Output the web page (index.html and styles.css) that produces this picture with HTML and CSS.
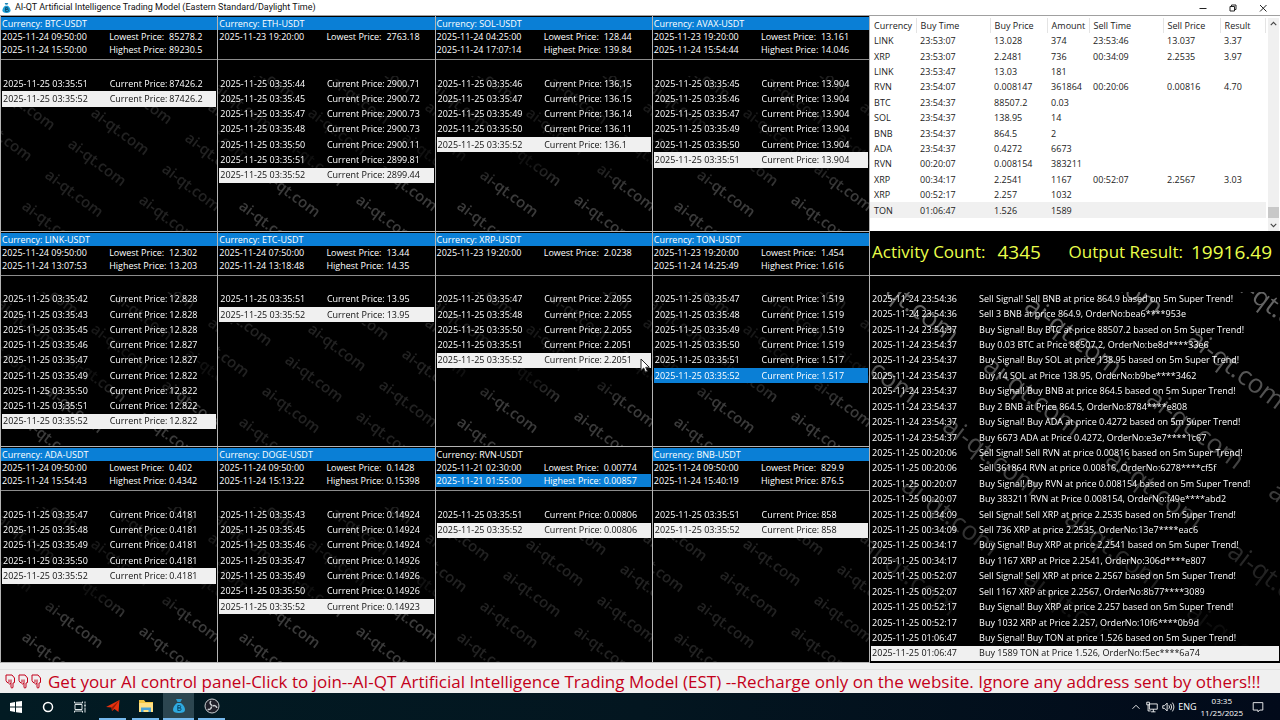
FILE: index.html
```html
<!DOCTYPE html>
<html lang="en">
<head>
    <meta charset="UTF-8">
    <meta name="viewport" content="width=device-width, initial-scale=1.0">
    <title>AI-QT Artificial Intelligence Trading Model</title>
    <link rel="stylesheet" href="styles.css">
</head>
<body>
    <header class="titlebar">
        <svg class="app-icon" viewBox="0 0 20 24" aria-hidden="true">
            <path d="M6 1h8l-2 4H8z" fill="#1c86b8"/>
            <path d="M7 7h6c4 3 6 7 6 10 0 4-3 6-9 6s-9-2-9-6c0-3 2-7 6-10z" fill="#1fa0d8"/>
            <path d="M8 11v9M8 11h3a2 2 0 0 1 0 4H8h4a2 2 0 0 1 0 5H8" fill="none" stroke="#0b4a6b" stroke-width="2"/>
        </svg>
        <h1>AI-QT Artificial Intelligence Trading Model (Eastern Standard/Daylight Time)</h1>
        <div class="window-buttons">
            <button type="button" aria-label="Minimize"><svg viewBox="0 0 10 10"><path d="M1.500 5.500h7"/></svg></button>
            <button type="button" aria-label="Restore"><svg viewBox="0 0 10 10"><path d="M2 3.500h4.500v4.500H2zM3.500 3.500V2h4.500v4.500H6.500"/></svg></button>
            <button type="button" aria-label="Close"><svg viewBox="0 0 10 10"><path d="M2 2l6.500 6.500M8.500 2L2 8.500"/></svg></button>
        </div>
    </header>

    <main class="workspace">
        <section class="markets" id="markets"></section>

        <aside class="side">
            <div class="trades">
                <table>
                    <colgroup>
                        <col class="c-short"><col class="c-time"><col class="c-price"><col class="c-amount"><col class="c-time"><col class="c-price"><col>
                    </colgroup>
                    <thead>
                        <tr><th>Currency</th><th>Buy Time</th><th>Buy Price</th><th>Amount</th><th>Sell Time</th><th>Sell Price</th><th>Result</th></tr>
                    </thead>
                    <tbody id="trades"></tbody>
                </table>
                <div class="scrollbar">
                    <svg viewBox="0 0 10 10"><path d="M2.500 6.500L5 4l2.500 2.500"/></svg>
                    <span class="thumb"></span>
                    <svg viewBox="0 0 10 10"><path d="M2.500 3.500L5 6l2.500-2.500"/></svg>
                </div>
            </div>
            <div class="totals">
                <span>Activity Count:</span><span class="value count">4345</span>
                <span class="result-label">Output Result:</span><span class="value">19916.49</span>
            </div>
            <div class="log">
                <svg class="watermark" id="logMark" aria-hidden="true"></svg>
                <ul id="log"></ul>
            </div>
        </aside>
    </main>

    <div class="notice">
        <a href="#join">
            <span class="hands" id="hands"></span>
            <span>Get your AI control panel-Click to join--AI-QT Artificial Intelligence Trading Model (EST) --Recharge only on the website. Ignore any address sent by others!!!</span>
        </a>
    </div>

    <footer class="taskbar">
        <button type="button" class="task" aria-label="Start"><svg viewBox="0 0 16 16" fill="#fff"><path d="M2 4l5-1v4.500H2zM8 2.800L14 2v5.500H8zM2 8.500h5V13l-5-1zM8 8.500h6V14l-6-.8z"/></svg></button>
        <button type="button" class="task" aria-label="Search"><svg viewBox="0 0 16 16"><circle cx="8" cy="8" r="4.500" fill="none" stroke="#fff" stroke-width="1.500"/></svg></button>
        <button type="button" class="task" aria-label="Task View"><svg viewBox="0 0 16 16" fill="none" stroke="#dfe6e8"><path d="M3 5.500h7v5H3zM2.500 2.500v1.500h8V2.500M2.500 13.500V12h8v1.500M13 2.500v2M13 8.500v5"/><path d="M12.200 6.500h1.600" stroke-width="2"/></svg></button>
        <button type="button" class="task open" aria-label="Telegram"><svg viewBox="0 0 16 16"><path d="M1 9L14.500 2l-1 12-4-3-2.500 2-.5-3.500z" fill="#e8320f"/><path d="M6.500 9.500L14.500 2 8.500 10.500 7 13z" fill="#9c1c06"/></svg></button>
        <button type="button" class="task open" aria-label="File Explorer"><svg viewBox="0 0 16 16"><path d="M1 2h5l1.500 2H15v10H1z" fill="#f2c744"/><path d="M1 5h14v9H1z" fill="#ffe083"/><path d="M3 14V9.500h10V14h-2.500v-2h-5v2z" fill="#4aa3d8"/></svg></button>
        <button type="button" class="task open active" aria-label="AI-QT"><svg viewBox="0 0 16 16"><path d="M5 1h6l-1.500 3h-3z" fill="#2b9fd2"/><path d="M6 5h4c3 2 4 5 4 7 0 2-2 3-6 3s-6-1-6-3c0-2 1-5 4-7z" fill="#2eaae0"/><path d="M6.800 7.500v5M6.800 7.500h1.700a1.200 1.200 0 0 1 0 2.400H6.800h2a1.300 1.300 0 0 1 0 2.600h-2" fill="none" stroke="#0b4a6b"/></svg></button>
        <button type="button" class="task open" aria-label="OBS Studio"><svg viewBox="0 0 16 16"><circle cx="8" cy="8" r="7" fill="#20202a" stroke="#c9cdd0"/><path d="M8 7.500c-2-1-2.500-3-1-4.500M8.500 8c2-1 4 0 4.300 2M7.500 8.500c0 2.200-1.800 3.500-3.800 2.800" fill="none" stroke="#c9cdd0" stroke-width="1.500"/></svg></button>

        <div class="tray">
            <svg viewBox="0 0 16 16"><path d="M4 10l4-4 4 4"/></svg>
            <svg viewBox="0 0 16 16"><path d="M5 4.500h9v6H5zM9.500 10.500v3M7 13.500h5M2 2.500h3v3H2zM3.500 5.500v7h3"/></svg>
            <svg viewBox="0 0 16 16"><path d="M2 6.500h2l3-3v9l-3-3H2zM9 6q1.500 2 0 4M11 4.500q2.500 3.500 0 7M13 3q3.500 5 0 10"/></svg>
            <span class="lang">ENG</span>
            <time class="clock"><span>03:35</span><span>11/25/2025</span></time>
            <svg class="note" viewBox="0 0 16 16"><path d="M2.500 3h11v8.500H10L8 13.500V11.500H2.500z"/></svg>
        </div>
    </footer>

    <script src="app.js"></script>
</body>
</html>
```
FILE: styles.css
```css
* {
    box-sizing: border-box;
}

body {
    margin: 0;
    min-height: 100vh;
    display: flex;
    flex-direction: column;
    background: #f0f0f0;
    color: #fff;
    font: 9px/13px "Open Sans", "Noto Sans", sans-serif;
}

ul {
    list-style: none;
    margin: 0;
    padding: 0;
}

button {
    border: 0;
    padding: 0;
    background: none;
}

/* title bar */
.titlebar {
    display: flex;
    align-items: center;
    height: 15px;
    padding: 0 2px;
    background: #fff;
    color: #111;
}

.titlebar h1 {
    flex: 1;
    margin: 0 0 0 4px;
    font: 400 9px/13px Roboto, sans-serif;
}

.app-icon {
    width: 9px;
    height: 12px;
}

.window-buttons {
    display: flex;
}

.window-buttons button {
    width: 30px;
    height: 15px;
    display: flex;
    align-items: center;
    justify-content: center;
}

.window-buttons svg {
    width: 10px;
    height: 10px;
    fill: none;
    stroke: #222;
}

/* main area */
.workspace {
    flex: 1;
    display: grid;
    grid-template-columns: 679fr 321fr;
    border-top: 1px solid #a0a0a0;
    background: #000;
}

.markets {
    display: grid;
    grid-template-columns: repeat(4, 1fr);
    grid-template-rows: repeat(3, 1fr);
}

.panel {
    display: flex;
    flex-direction: column;
    min-width: 0;
    border-left: 1px solid #b4b4b4;
    border-bottom: 1px solid #b4b4b4;
}

.range {
    height: 44px;
    padding-top: 1px;
    border-bottom: 1px solid #8c8c8c;
}

.range li {
    display: grid;
    grid-template-columns: 50% 28% 1fr;
    height: 13px;
    padding-left: 1px;
    margin-right: 1px;
    white-space: nowrap;
}

.range .name {
    display: block;
    margin-right: 0;
}

li.blue {
    background: #0a7fd6;
    color: #fff;
}

li.white {
    background: #f0f0f0;
    color: #111;
}

.prices {
    flex: 1;
    position: relative;
    overflow: hidden;
    padding: 16px 1px 2px 1px;
}

.prices ul {
    position: relative;
    height: 100%;
    display: grid;
    grid-template-rows: repeat(10, 1fr);
}

.prices li {
    position: relative;
    display: grid;
    grid-template-columns: 50% 28% 1fr;
    align-items: center;
    padding-left: 1px;
    line-height: 12px;
    white-space: nowrap;
}

.watermark {
    position: absolute;
    inset: 16px 0 0 0;
    width: 100%;
    height: 100%;
    fill: #aaa;
    font: 600 15px "Open Sans", sans-serif;
    opacity: 0.35;
    mask-image: linear-gradient(#0008, #0004 50%, #000 65%);
}

.panel.quiet .watermark {
    opacity: 0.2;
    mask-image: linear-gradient(transparent 31px, #000 31px);
}

.cursor {
    position: absolute;
    right: -1px;
    top: 5px;
    width: 12px;
    height: 16px;
    z-index: 1;
}

/* right side */
.side {
    display: flex;
    flex-direction: column;
    min-width: 0;
    border-left: 1px solid #b4b4b4;
}

.trades {
    display: flex;
    height: 215px;
    padding: 2px 1px 0 0;
    background: #fff;
    color: #222;
}

.trades table {
    flex: 1;
    height: 200px;
    table-layout: fixed;
    border-collapse: collapse;
}

.trades th,
.trades td {
    padding: 0 0 0 4px;
    text-align: left;
    font-weight: 400;
    white-space: nowrap;
}

.trades th {
    height: 15px;
    border-right: 1px solid #e4e4e4;
}

.trades tbody tr:last-child {
    background: #f0f0f0;
}

.c-short {
    width: 46px;
}

.c-time {
    width: 74px;
}

.c-price {
    width: 57px;
}

.c-amount {
    width: 42px;
}

.scrollbar {
    display: flex;
    flex-direction: column;
    width: 11px;
    margin-left: 2px;
    background: #f0f0f0;
}

.scrollbar svg {
    height: 11px;
    fill: none;
    stroke: #444;
}

.thumb {
    height: 11px;
    margin: auto 0 2px;
    background: #c8c8c8;
}

.totals {
    display: flex;
    align-items: center;
    height: 45px;
    padding: 0 8px 2px 2px;
    border-bottom: 1px solid #b4b4b4;
    color: #eaff4a;
    font-size: 17px;
    line-height: 24px;
    white-space: nowrap;
}

.value {
    font-size: 19px;
}

.count {
    margin-left: 12px;
}

.result-label {
    margin: 0 8px 0 auto;
}

.log {
    flex: 1;
    position: relative;
    display: flex;
    overflow: hidden;
    padding: 15px 1px 2px;
}

.log .watermark {
    font-size: 26px;
    font-weight: 400;
    opacity: 0.6;
    mask-image: linear-gradient(#000, #0008 60%, transparent 95%);
}

.log ul {
    position: relative;
    flex: 1;
    display: flex;
    flex-direction: column;
}

.log li {
    flex: 1;
    display: grid;
    grid-template-columns: 107px 1fr;
    align-items: center;
    padding-left: 1px;
    line-height: 12px;
    white-space: nowrap;
}

/* notice */
.notice {
    height: 30px;
    padding-top: 6px;
}

.notice a {
    display: flex;
    align-items: center;
    height: 24px;
    padding-left: 5px;
    border-top: 1px solid #e2e2e2;
    color: #c4001a;
    font-size: 17px;
    line-height: 24px;
    white-space: nowrap;
    text-decoration: none;
}

.hands {
    display: flex;
    gap: 2px;
    margin-right: 6px;
}

.hands svg {
    width: 11px;
    height: 15px;
    fill: none;
    stroke: #c4001a;
}

/* taskbar */
.taskbar {
    display: flex;
    height: 27px;
    background: linear-gradient(90deg, #021b23, #031620 50%, #020a1a);
}

.task {
    width: 32px;
    display: flex;
    align-items: center;
    justify-content: center;
}

.task svg {
    width: 16px;
    height: 16px;
}

.task.open {
    width: 27px;
    margin: 0 3px;
    border-bottom: 2px solid #76b9ed;
}

.task.active {
    width: 31px;
    margin: 0 1px;
    background: #2c4650;
}

.tray {
    display: flex;
    align-items: center;
    margin-left: auto;
    padding-right: 15px;
}

.tray svg {
    width: 14px;
    height: 14px;
    margin-right: 2px;
    fill: none;
    stroke: #fff;
}

.lang {
    margin: 0 4px 0 1px;
}

.clock {
    display: flex;
    flex-direction: column;
    align-items: center;
    font-size: 8px;
    line-height: 12px;
}

.tray .note {
    margin: 0 0 0 8px;
}
```
FILE: app.js
```js
const DAY = '2025-11-25 ';

// name, lowest [time, price], highest [time, price] or null, ticks [seconds, price]
const markets = [
    { name: 'BTC', low: ['2025-11-24 09:50:00', '85278.2'], high: ['2025-11-24 15:50:00', '89230.5'],
      ticks: [[51, '87426.2'], [52, '87426.2']] },
    { name: 'ETH', low: ['2025-11-23 19:20:00', '2763.18'], high: null,
      ticks: [[44, '2900.71'], [45, '2900.72'], [47, '2900.73'], [48, '2900.73'], [50, '2900.11'], [51, '2899.81'], [52, '2899.44']] },
    { name: 'SOL', low: ['2025-11-24 04:25:00', '128.44'], high: ['2025-11-24 17:07:14', '139.84'],
      ticks: [[46, '136.15'], [47, '136.15'], [49, '136.14'], [50, '136.11'], [52, '136.1']] },
    { name: 'AVAX', low: ['2025-11-23 19:20:00', '13.161'], high: ['2025-11-24 15:54:44', '14.046'],
      ticks: [[45, '13.904'], [46, '13.904'], [47, '13.904'], [49, '13.904'], [50, '13.904'], [51, '13.904']] },
    { name: 'LINK', low: ['2025-11-24 09:50:00', '12.302'], high: ['2025-11-24 13:07:53', '13.203'],
      ticks: [[42, '12.828'], [43, '12.828'], [45, '12.828'], [46, '12.827'], [47, '12.827'], [49, '12.822'], [50, '12.822'], [51, '12.822'], [52, '12.822']] },
    { name: 'ETC', low: ['2025-11-24 07:50:00', '13.44'], high: ['2025-11-24 13:18:48', '14.35'],
      ticks: [[51, '13.95'], [52, '13.95']] },
    { name: 'XRP', low: ['2025-11-23 19:20:00', '2.0238'], high: null, cursor: true,
      ticks: [[47, '2.2055'], [48, '2.2055'], [50, '2.2055'], [51, '2.2051'], [52, '2.2051']] },
    { name: 'TON', low: ['2025-11-23 19:20:00', '1.454'], high: ['2025-11-24 14:25:49', '1.616'], active: true,
      ticks: [[47, '1.519'], [48, '1.519'], [49, '1.519'], [50, '1.519'], [51, '1.517'], [52, '1.517']] },
    { name: 'ADA', low: ['2025-11-24 09:50:00', '0.402'], high: ['2025-11-24 15:54:43', '0.4342'],
      ticks: [[47, '0.4181'], [48, '0.4181'], [49, '0.4181'], [50, '0.4181'], [52, '0.4181']] },
    { name: 'DOGE', low: ['2025-11-24 09:50:00', '0.1428'], high: ['2025-11-24 15:13:22', '0.15398'],
      ticks: [[43, '0.14924'], [45, '0.14924'], [46, '0.14924'], [47, '0.14926'], [49, '0.14926'], [50, '0.14926'], [52, '0.14923']] },
    { name: 'RVN', low: ['2025-11-21 02:30:00', '0.00774'], high: ['2025-11-21 01:55:00', '0.00857'], highSelected: true,
      ticks: [[51, '0.00806'], [52, '0.00806']] },
    { name: 'BNB', low: ['2025-11-24 09:50:00', '829.9'], high: ['2025-11-24 15:40:19', '876.5'],
      ticks: [[51, '858'], [52, '858']] }
];

const trades = [
    ['LINK', '23:53:07', '13.028', '374', '23:53:46', '13.037', '3.37'],
    ['XRP', '23:53:07', '2.2481', '736', '00:34:09', '2.2535', '3.97'],
    ['LINK', '23:53:47', '13.03', '181', '', '', ''],
    ['RVN', '23:54:07', '0.008147', '361864', '00:20:06', '0.00816', '4.70'],
    ['BTC', '23:54:37', '88507.2', '0.03', '', '', ''],
    ['SOL', '23:54:37', '138.95', '14', '', '', ''],
    ['BNB', '23:54:37', '864.5', '2', '', '', ''],
    ['ADA', '23:54:37', '0.4272', '6673', '', '', ''],
    ['RVN', '00:20:07', '0.008154', '383211', '', '', ''],
    ['XRP', '00:34:17', '2.2541', '1167', '00:52:07', '2.2567', '3.03'],
    ['XRP', '00:52:17', '2.257', '1032', '', '', ''],
    ['TON', '01:06:47', '1.526', '1589', '', '', '']
];

const log = [
    ['2025-11-24 23:54:36', 'Sell Signal! Sell BNB at price 864.9 based on 5m Super Trend!'],
    ['2025-11-24 23:54:36', 'Sell 3 BNB at price 864.9, OrderNo:bea6****953e'],
    ['2025-11-24 23:54:37', 'Buy Signal! Buy BTC at price 88507.2 based on 5m Super Trend!'],
    ['2025-11-24 23:54:37', 'Buy 0.03 BTC at Price 88507.2, OrderNo:be8d****33e6'],
    ['2025-11-24 23:54:37', 'Buy Signal! Buy SOL at price 138.95 based on 5m Super Trend!'],
    ['2025-11-24 23:54:37', 'Buy 14 SOL at Price 138.95, OrderNo:b9be****3462'],
    ['2025-11-24 23:54:37', 'Buy Signal! Buy BNB at price 864.5 based on 5m Super Trend!'],
    ['2025-11-24 23:54:37', 'Buy 2 BNB at Price 864.5, OrderNo:8784****e808'],
    ['2025-11-24 23:54:37', 'Buy Signal! Buy ADA at price 0.4272 based on 5m Super Trend!'],
    ['2025-11-24 23:54:37', 'Buy 6673 ADA at Price 0.4272, OrderNo:e3e7****1c67'],
    ['2025-11-25 00:20:06', 'Sell Signal! Sell RVN at price 0.00816 based on 5m Super Trend!'],
    ['2025-11-25 00:20:06', 'Sell 361864 RVN at price 0.00816, OrderNo:6278****cf5f'],
    ['2025-11-25 00:20:07', 'Buy Signal! Buy RVN at price 0.008154 based on 5m Super Trend!'],
    ['2025-11-25 00:20:07', 'Buy 383211 RVN at Price 0.008154, OrderNo:f49e****abd2'],
    ['2025-11-25 00:34:09', 'Sell Signal! Sell XRP at price 2.2535 based on 5m Super Trend!'],
    ['2025-11-25 00:34:09', 'Sell 736 XRP at price 2.2535, OrderNo:13e7****eac6'],
    ['2025-11-25 00:34:17', 'Buy Signal! Buy XRP at price 2.2541 based on 5m Super Trend!'],
    ['2025-11-25 00:34:17', 'Buy 1167 XRP at Price 2.2541, OrderNo:306d****e807'],
    ['2025-11-25 00:52:07', 'Sell Signal! Sell XRP at price 2.2567 based on 5m Super Trend!'],
    ['2025-11-25 00:52:07', 'Sell 1167 XRP at price 2.2567, OrderNo:8b77****3089'],
    ['2025-11-25 00:52:17', 'Buy Signal! Buy XRP at price 2.257 based on 5m Super Trend!'],
    ['2025-11-25 00:52:17', 'Buy 1032 XRP at Price 2.257, OrderNo:10f6****0b9d'],
    ['2025-11-25 01:06:47', 'Buy Signal! Buy TON at price 1.526 based on 5m Super Trend!'],
    ['2025-11-25 01:06:47', 'Buy 1589 TON at Price 1.526, OrderNo:f5ec****6a74']
];

// Repeat the site name on a slanted lattice: down-left by a, right by b.
// Marks that start outside the w x h area (less one mark length) are skipped.
function watermark(x, y, a, b, w, h, len) {
    let out = '';
    for (let i = -4; i <= 9; i++) {
        for (let j = -3; j <= 4; j++) {
            const px = x + a[0] * i + b[0] * j;
            const py = y + a[1] * i + b[1] * j;
            if (px < -len || px > w || py < -len || py > h) continue;
            out += `<text transform="translate(${px} ${py}) rotate(37)">ai-qt.com</text>`;
        }
    }
    return out;
}

function rangeRow(label, point, cls) {
    return `<li class="${cls}"><span>${point[0]}</span><span>${label}</span><span>${point[1]}</span></li>`;
}

const cursor = '<svg class="cursor" viewBox="0 0 12 16"><path d="M1 1v11.500l2.700-2.500 1.800 4.200 2-.9-1.800-4h3.600z" fill="#fff" stroke="#222"/></svg>';

document.getElementById('markets').innerHTML = markets.map(m => {
    const last = m.ticks.length - 1;
    const rows = m.ticks.map((t, i) => {
        const cls = i === last ? (m.active ? 'blue' : 'white') : '';
        return `<li class="${cls}"><span>${DAY}03:35:${t[0]}</span><span>Current Price:</span><span>${t[1]}</span>${i === last && m.cursor ? cursor : ''}</li>`;
    }).join('');
    return `<div class="panel ${last === 1 ? 'quiet' : ''}">
        <ul class="range">
            <li class="name ${m.highSelected ? '' : 'blue'}">Currency: ${m.name}-USDT</li>
            ${rangeRow('Lowest Price:', m.low, '')}
            ${m.high ? rangeRow('Highest Price:', m.high, m.highSelected ? 'blue' : '') : ''}
        </ul>
        <div class="prices">
            <svg class="watermark" aria-hidden="true">${watermark(89, 39, [-23, 31], [94, 25], 210, 155, 50)}</svg>
            <ul>${rows}</ul>
        </div>
    </div>`;
}).join('');

document.getElementById('trades').innerHTML = trades
    .map(t => '<tr>' + t.map(v => `<td>${v}</td>`).join('') + '</tr>').join('');

document.getElementById('log').innerHTML = log
    .map((l, i) => `<li class="${i === log.length - 1 ? 'white' : ''}"><span>${l[0]}</span><span>${l[1]}</span></li>`).join('');

document.getElementById('logMark').innerHTML = watermark(153, 17, [-41, 60], [163, 33], 405, 350, 90);

const hand = '<svg viewBox="0 0 11 15"><path d="M1 1h6l2.500 3v4.500l-1.500.5v4.500q-1.200 1-2 0V9.500l-1.500.5-1.300-1.200-1.200-.5L1 6.500zM4 5.500v3M6 5.500v4"/></svg>';
document.getElementById('hands').innerHTML = hand.repeat(3);
```
